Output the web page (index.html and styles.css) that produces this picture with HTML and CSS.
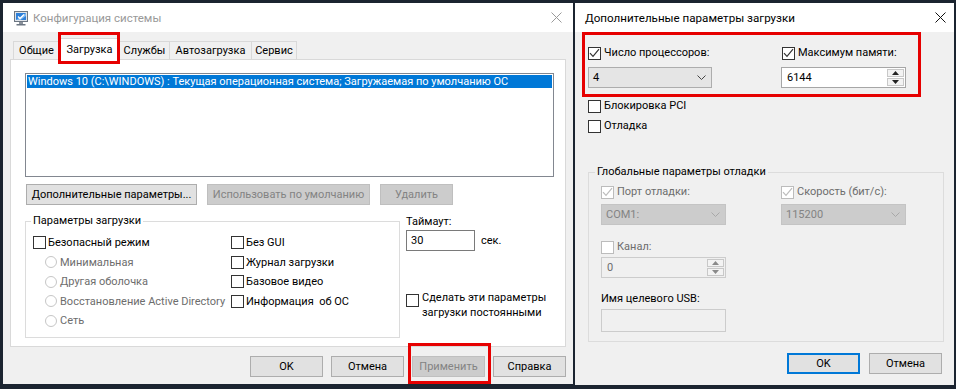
FILE: index.html
```html
<!DOCTYPE html>
<html lang="ru">
<head>
<meta charset="utf-8">
<title>Конфигурация системы</title>
<link rel="stylesheet" href="styles.css">
</head>
<body>
<div class="desktop">
  <section class="win win-main">
    <header class="titlebar">
      <svg class="app-icon" viewBox="0 0 16 16">
        <rect x="1.5" y="1.5" width="13" height="10" fill="#dfe3e8" stroke="#6c7682"/>
        <rect x="3" y="3" width="10" height="7" fill="#2d7fd9"/>
        <path d="M3 10 L13 3 L13 6 L7.5 10 Z" fill="#7db7f0"/>
        <path d="M5 6.5 L7 8.5 L11 4.5" fill="none" stroke="#fff" stroke-width="1.3"/>
        <rect x="6" y="12" width="4" height="2" fill="#8a929c"/>
        <rect x="3.5" y="14" width="9" height="1.5" fill="#6c7682"/>
      </svg>
      <span class="title title-inactive">Конфигурация системы</span>
      <svg class="close-x close-inactive" viewBox="0 0 11 11"><path d="M0.5 0.5 L10.5 10.5 M10.5 0.5 L0.5 10.5"/></svg>
    </header>
    <div class="main-body">
      <div class="tabs">
        <div class="tab tab-w1">Общие</div>
        <div class="tab tab-sel">Загрузка</div>
        <div class="tab tab-w3">Службы</div>
        <div class="tab tab-w4">Автозагрузка</div>
        <div class="tab tab-w5">Сервис</div>
      </div>
      <div class="panel">
        <div class="listbox">
          <div class="list-item selected">Windows 10 (C:\WINDOWS) : Текущая операционная система; Загружаемая по умолчанию ОС</div>
        </div>
        <div class="btn-row">
          <div class="btn btn-adv">Дополнительные параметры...</div>
          <div class="btn btn-dis btn-default">Использовать по умолчанию</div>
          <div class="btn btn-dis btn-del">Удалить</div>
        </div>
        <div class="lower">
          <fieldset class="group boot-group">
            <legend class="legend-boot">Параметры загрузки</legend>
            <div class="boot-cols">
              <div class="col-l">
                <div class="opt"><span class="chk"></span><span>Безопасный режим</span></div>
                <div class="opt sub dis"><span class="radio"></span><span>Минимальная</span></div>
                <div class="opt sub dis"><span class="radio"></span><span>Другая оболочка</span></div>
                <div class="opt sub dis"><span class="radio"></span><span>Восстановление Active Directory</span></div>
                <div class="opt sub dis"><span class="radio"></span><span>Сеть</span></div>
              </div>
              <div class="col-r">
                <div class="opt"><span class="chk"></span><span>Без GUI</span></div>
                <div class="opt"><span class="chk"></span><span>Журнал загрузки</span></div>
                <div class="opt"><span class="chk"></span><span>Базовое видео</span></div>
                <div class="opt"><span class="chk"></span><span>Информация&nbsp; об ОС</span></div>
              </div>
            </div>
          </fieldset>
          <div class="timeout">
            <div class="timeout-lbl">Таймаут:</div>
            <div class="timeout-row">
              <div class="edit timeout-edit">30</div>
              <span class="sec">сек.</span>
            </div>
            <div class="persist">
              <span class="chk"></span>
              <span class="persist-text">Сделать эти параметры<br>загрузки постоянными</span>
            </div>
          </div>
        </div>
      </div>
      <div class="footer main-footer">
        <div class="btn btn-foot">OK</div>
        <div class="btn btn-foot">Отмена</div>
        <div class="btn btn-foot btn-dis">Применить</div>
        <div class="btn btn-foot">Справка</div>
      </div>
    </div>
    <div class="mark mark-tab"></div>
    <div class="mark mark-apply"></div>
  </section>

  <section class="win win-adv">
    <header class="titlebar">
      <span class="title title-adv">Дополнительные параметры загрузки</span>
      <svg class="close-x close-active" viewBox="0 0 11 11"><path d="M0.5 0.5 L10.5 10.5 M10.5 0.5 L0.5 10.5"/></svg>
    </header>
    <div class="adv-body">
      <div class="adv-top">
        <div class="acol acol-1">
          <div class="opt2"><span class="chk"><svg class="tick" viewBox="0 0 11 11"><path d="M1 5.2 L4 8.4 L10 1.2"/></svg></span><span>Число процессоров:</span></div>
          <div class="combo">
            <span class="combo-val">4</span>
            <svg class="chev" viewBox="0 0 9 5"><path d="M0.5 0.5 L4.5 4.5 L8.5 0.5"/></svg>
          </div>
        </div>
        <div class="acol">
          <div class="opt2"><span class="chk"><svg class="tick" viewBox="0 0 11 11"><path d="M1 5.2 L4 8.4 L10 1.2"/></svg></span><span>Максимум памяти:</span></div>
          <div class="spin spin-mem">
            <span class="spin-val">6144</span>
            <span class="spin-btns">
              <span class="sb"><svg viewBox="0 0 7 4"><path d="M0 4 L3.5 0 L7 4 Z"/></svg></span>
              <span class="sb"><svg viewBox="0 0 7 4"><path d="M0 0 L3.5 4 L7 0 Z"/></svg></span>
            </span>
          </div>
        </div>
      </div>
      <div class="opt2 row20 first-row20"><span class="chk"></span><span>Блокировка PCI</span></div>
      <div class="opt2 row20"><span class="chk"></span><span>Отладка</span></div>

      <fieldset class="group dbg-group">
        <legend class="legend-dbg">Глобальные параметры отладки</legend>
        <div class="dbg-top">
          <div class="dcol dcol-1">
            <div class="opt2 dis"><span class="chk chk-dis"><svg class="tick" viewBox="0 0 11 11"><path d="M1 5.2 L4 8.4 L10 1.2"/></svg></span><span>Порт отладки:</span></div>
            <div class="combo combo-dis">
              <span class="combo-val">COM1:</span>
              <svg class="chev" viewBox="0 0 9 5"><path d="M0.5 0.5 L4.5 4.5 L8.5 0.5"/></svg>
            </div>
          </div>
          <div class="dcol">
            <div class="opt2 dis"><span class="chk chk-dis"><svg class="tick" viewBox="0 0 11 11"><path d="M1 5.2 L4 8.4 L10 1.2"/></svg></span><span>Скорость (бит/с):</span></div>
            <div class="combo combo-dis">
              <span class="combo-val">115200</span>
              <svg class="chev" viewBox="0 0 9 5"><path d="M0.5 0.5 L4.5 4.5 L8.5 0.5"/></svg>
            </div>
          </div>
        </div>
        <div class="opt2 dis channel"><span class="chk chk-dis"></span><span>Канал:</span></div>
        <div class="spin spin-dis">
          <span class="spin-val">0</span>
          <span class="spin-btns">
            <span class="sb"><svg viewBox="0 0 7 4"><path d="M0 4 L3.5 0 L7 4 Z"/></svg></span>
            <span class="sb"><svg viewBox="0 0 7 4"><path d="M0 0 L3.5 4 L7 0 Z"/></svg></span>
          </span>
        </div>
        <div class="usb-lbl">Имя целевого USB:</div>
        <div class="usb-edit"></div>
      </fieldset>

      <div class="footer adv-footer">
        <div class="btn btn-foot btn-default-focus">OK</div>
        <div class="btn btn-foot">Отмена</div>
      </div>
    </div>
    <div class="mark mark-adv"></div>
  </section>
</div>
</body>
</html>
```

FILE: styles.css
```css
* { box-sizing: border-box; }
html, body { margin: 0; padding: 0; }
body {
  width: 956px;
  height: 389px;
  overflow: hidden;
  background: #1b2430;
  font-family: Roboto, "Noto Sans", sans-serif;
  font-size: 11px;
  color: #000;
}
.desktop {
  display: flex;
  gap: 2px;
  padding: 3px 0 0 3px;
}
.win {
  position: relative;
  background: #f0f0f0;
  display: flex;
  flex-direction: column;
  flex: none;
}
.win-main { width: 570px; height: 381px; }
.win-adv { width: 379px; height: 382px; }

/* title bar */
.titlebar {
  height: 29px;
  flex: none;
  background: #fff;
  display: flex;
  align-items: center;
}
.win-main .titlebar { padding: 0 11px 0 10px; }
.win-adv .titlebar { padding: 0 8px 0 10px; }
.app-icon { width: 16px; height: 16px; margin-right: 4px; flex: none; }
.title { flex: 1; line-height: 16px; white-space: nowrap; }
.title-inactive { color: #999; font-size: 11.5px; }
.title-adv { font-size: 11.6px; }
.close-x { width: 11px; height: 11px; flex: none; }
.close-x path { fill: none; stroke-width: 1; }
.close-inactive path { stroke: #9a9a9a; }
.close-active path { stroke: #111; }

/* main window body */
.main-body {
  padding: 6px 7px 0 7px;
  display: flex;
  flex-direction: column;
}
.tabs {
  display: flex;
  height: 21px;
  padding-left: 3px;
}
.tab {
  height: 18px;
  margin-top: 3px;
  border: 1px solid #d9d9d9;
  border-bottom: none;
  background: #f0f0f0;
  display: flex;
  align-items: center;
  justify-content: center;
  line-height: 15px;
  white-space: nowrap;
}
.tab + .tab { margin-left: -1px; }
.tab-w1 { width: 47px; }
.tab-sel {
  position: relative;
  z-index: 1;
  width: 61px;
  height: 22px;
  margin-top: 0;
  background: #fff;
  padding-bottom: 1px;
}
.tab-w3 { width: 51px; }
.tab-w4 { width: 83px; }
.tab-w5 { width: 46px; }

.panel {
  width: 556px;
  height: 288px;
  border: 1px solid #d9d9d9;
  background: #fff;
  display: flex;
  flex-direction: column;
}
.listbox {
  margin: 13px 0 0 14px;
  width: 529px;
  height: 104px;
  border: 1px solid #828790;
  padding: 1px;
}
.list-item {
  height: 13px;
  line-height: 13px;
  padding-left: 1px;
  white-space: nowrap;
  overflow: hidden;
}
.selected { background: #0078d7; color: #fff; }

.btn {
  height: 21px;
  border: 1px solid #adadad;
  background: #e1e1e1;
  display: flex;
  align-items: center;
  justify-content: center;
  line-height: 15px;
  white-space: nowrap;
  flex: none;
}
.btn-dis {
  background: #cccccc;
  border-color: #bfbfbf;
  color: #838383;
}
.btn-row {
  display: flex;
  gap: 10px;
  margin: 7px 0 0 15px;
}
.btn-adv { width: 171px; }
.btn-default { width: 163px; }
.btn-del { width: 73px; }

.lower {
  display: flex;
  margin-top: 8px;
}
.group {
  margin: 0;
  min-width: 0;
  border: 1px solid #dcdcdc;
}
.group legend {
  padding: 0 2px;
  line-height: 16px;
  white-space: nowrap;
}
.boot-group {
  margin-left: 14px;
  width: 375px;
  height: 125px;
  padding: 4px 0 0 7px;
}
.legend-boot { margin-left: -2px; }
.boot-cols { display: flex; }
.col-l { width: 198px; flex: none; }
.col-r { flex: 1; }
.opt {
  height: 19.5px;
  display: flex;
  align-items: center;
  white-space: nowrap;
  line-height: 15px;
}
.sub { padding-left: 12px; }
.dis { color: #6d6d6d; }
.chk {
  width: 13px;
  height: 13px;
  border: 1px solid #333;
  background: #fff;
  margin-right: 2px;
  flex: none;
  display: flex;
  align-items: center;
  justify-content: center;
}
.chk-dis { border-color: #bcbcbc; }
.tick { width: 11px; height: 11px; }
.tick path { fill: none; stroke: #333; stroke-width: 1.2; }
.chk-dis .tick path { stroke: #bcbcbc; }
.radio {
  width: 12px;
  height: 12px;
  border-radius: 50%;
  border: 1px solid #c6c6c6;
  background: #fff;
  margin-right: 3px;
  flex: none;
}

.timeout {
  margin-left: 6px;
  padding-top: 1px;
  display: flex;
  flex-direction: column;
}
.timeout-lbl { line-height: 16px; }
.timeout-row { display: flex; align-items: center; }
.edit {
  border: 1px solid #7a7a7a;
  background: #fff;
  height: 21px;
  line-height: 19px;
  padding-left: 4px;
}
.timeout-edit { width: 69px; }
.sec { margin-left: 6px; line-height: 16px; }
.persist {
  display: flex;
  align-items: flex-start;
  margin-top: 39px;
}
.persist .chk { margin-top: 4px; margin-right: 3px; }
.persist-text { line-height: 15px; }

.footer {
  display: flex;
  justify-content: flex-end;
}
.main-footer {
  margin-top: 9px;
  gap: 8px;
}
.btn-foot { width: 73px; }

/* red highlight marks */
.mark {
  position: absolute;
  border: 3px solid #e60000;
  z-index: 5;
}
.mark-tab { left: 55px; top: 29px; width: 62px; height: 32px; }
.mark-apply { left: 405px; top: 340px; width: 83px; height: 41px; }
.mark-adv { left: 7px; top: 29px; width: 339px; height: 65px; }

/* advanced window */
.adv-body {
  padding: 13px 0 0 13px;
  display: flex;
  flex-direction: column;
}
.adv-top { display: flex; }
.acol { display: flex; flex-direction: column; }
.acol-1 { width: 194px; flex: none; }
.opt2 {
  display: flex;
  align-items: center;
  height: 16px;
  line-height: 16px;
  white-space: nowrap;
}
.opt2 .chk { margin-right: 3px; }
.combo {
  margin-top: 6px;
  width: 124px;
  height: 21px;
  border: 1px solid #adadad;
  background: #e5e5e5;
  display: flex;
  align-items: center;
  padding: 0 5px 0 4px;
}
.combo-val { flex: 1; line-height: 15px; }
.chev { width: 9px; height: 5px; }
.chev path { fill: none; stroke: #444; stroke-width: 1; }
.combo-dis {
  background: #cccccc;
  border-color: #c4c4c4;
  color: #838383;
  width: 125px;
}
.combo-dis .chev path { stroke: #a8a8a8; }
.dcol .combo { margin-top: 4px; }
.spin {
  width: 125px;
  height: 21px;
  border: 1px solid #a6a6a6;
  background: #fff;
  display: flex;
  align-items: stretch;
  padding: 1px;
}
.spin-mem { margin: 6px 0 0 -1px; }
.spin-val { flex: 1; line-height: 17px; padding-left: 4px; }
.spin-btns {
  width: 17px;
  display: flex;
  flex-direction: column;
  gap: 1px;
}
.sb {
  flex: 1;
  border: 1px solid #c8c8c8;
  background: #f3f3f3;
  display: flex;
  align-items: center;
  justify-content: center;
}
.sb svg { width: 7px; height: 4px; }
.sb path { fill: #222; }
.spin-dis {
  margin-top: 2px;
  background: #f0f0f0;
  border-color: #cccccc;
  color: #6d6d6d;
}
.spin-dis .sb path { fill: #8a8a8a; }

.row20 { height: 20px; }
.first-row20 { margin-top: 8px; }

.dbg-group {
  margin-top: 28px;
  width: 356px;
  height: 178px;
  padding: 4px 0 0 12px;
}
.legend-dbg { margin-left: -6px; }
.dbg-top { display: flex; }
.dcol { display: flex; flex-direction: column; }
.dcol-1 { width: 180px; flex: none; }
.channel { margin-top: 14px; }
.usb-lbl { margin-top: 13px; line-height: 16px; }
.usb-edit {
  margin-top: 2px;
  width: 125px;
  height: 23px;
  border: 1px solid #cccccc;
  background: #f0f0f0;
}
.adv-footer {
  margin-top: 11px;
  padding-right: 12px;
  gap: 9px;
}
.btn-default-focus { border: 2px solid #0078d7; }
```
